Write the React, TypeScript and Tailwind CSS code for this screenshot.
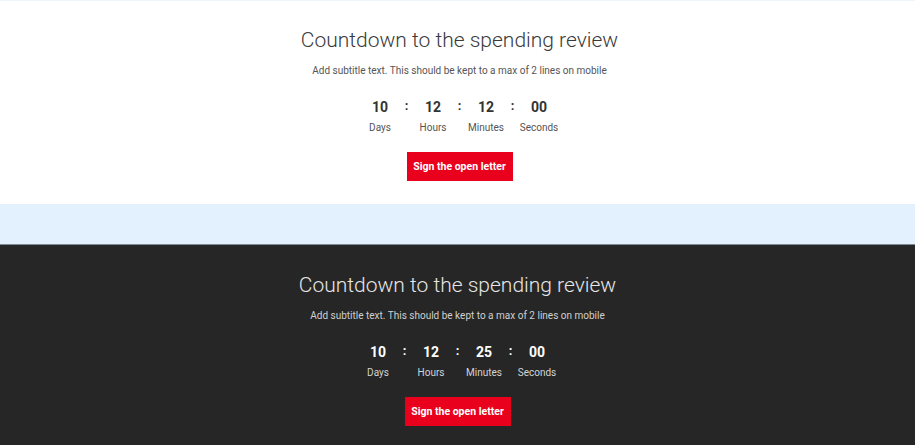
import React from "react";

type Unit = { value: string; label: string };

const whiteUnits: Unit[] = [
  { value: "10", label: "Days" },
  { value: "12", label: "Hours" },
  { value: "12", label: "Minutes" },
  { value: "00", label: "Seconds" },
];

const darkUnits: Unit[] = [
  { value: "10", label: "Days" },
  { value: "12", label: "Hours" },
  { value: "25", label: "Minutes" },
  { value: "00", label: "Seconds" },
];

function Countdown({ units, dark }: { units: Unit[]; dark?: boolean }) {
  return (
    <div className="mt-[20px] flex justify-center">
      {units.map((u, i) => (
        <React.Fragment key={u.label}>
          {i > 0 && (
            <div
              className={`w-[7px] text-center text-[13px] font-bold leading-[16px] ${
                dark ? "text-white" : "text-[#333]"
              }`}
            >
              :
            </div>
          )}
          <div className="flex w-[46px] flex-col items-center">
            <span
              className={`text-[14px] font-bold leading-[18px] ${
                dark ? "text-white" : "text-[#333]"
              }`}
            >
              {u.value}
            </span>
            <span
              className={`mt-[5px] text-[10px] leading-[14px] ${
                dark ? "text-[#d4d4d4]" : "text-[#555]"
              }`}
            >
              {u.label}
            </span>
          </div>
        </React.Fragment>
      ))}
    </div>
  );
}

function Banner({ units, dark }: { units: Unit[]; dark?: boolean }) {
  return (
    <section
      className={`flex h-[204px] flex-col items-center pt-[25px] ${
        dark ? "bg-[#262626] pt-[26px]" : "bg-white pl-[4px] border-t border-[#eef5fc]"
      }`}
    >
      <h1
        className={`text-[21px] font-light leading-[28px] ${
          dark ? "text-[#e6e6e6]" : "text-[#3a3a3a]"
        }`}
      >
        Countdown to the spending review
      </h1>
      <p
        className={`mt-[10px] text-[10px] leading-[14px] ${
          dark ? "text-[#d0d0d0]" : "text-[#555]"
        }`}
      >
        Add subtitle text. This should be kept to a max of 2 lines on mobile
      </p>
      <Countdown units={units} dark={dark} />
      <button
        type="button"
        className="mt-[17px] h-[29px] w-[106px] bg-[#e8001c] text-[10.5px] font-bold text-white"
      >
        Sign the open letter
      </button>
    </section>
  );
}

export default function App() {
  return (
    <div
      className="min-h-[445px] w-full bg-[#262626]"
      style={{ fontFamily: "Roboto, 'Liberation Sans', sans-serif" }}
    >
      <Banner units={whiteUnits} />
      <div className="h-[41px] border-b border-[#7d8b99] bg-[#e3f1fe]" />
      <Banner units={darkUnits} dark />
    </div>
  );
}
